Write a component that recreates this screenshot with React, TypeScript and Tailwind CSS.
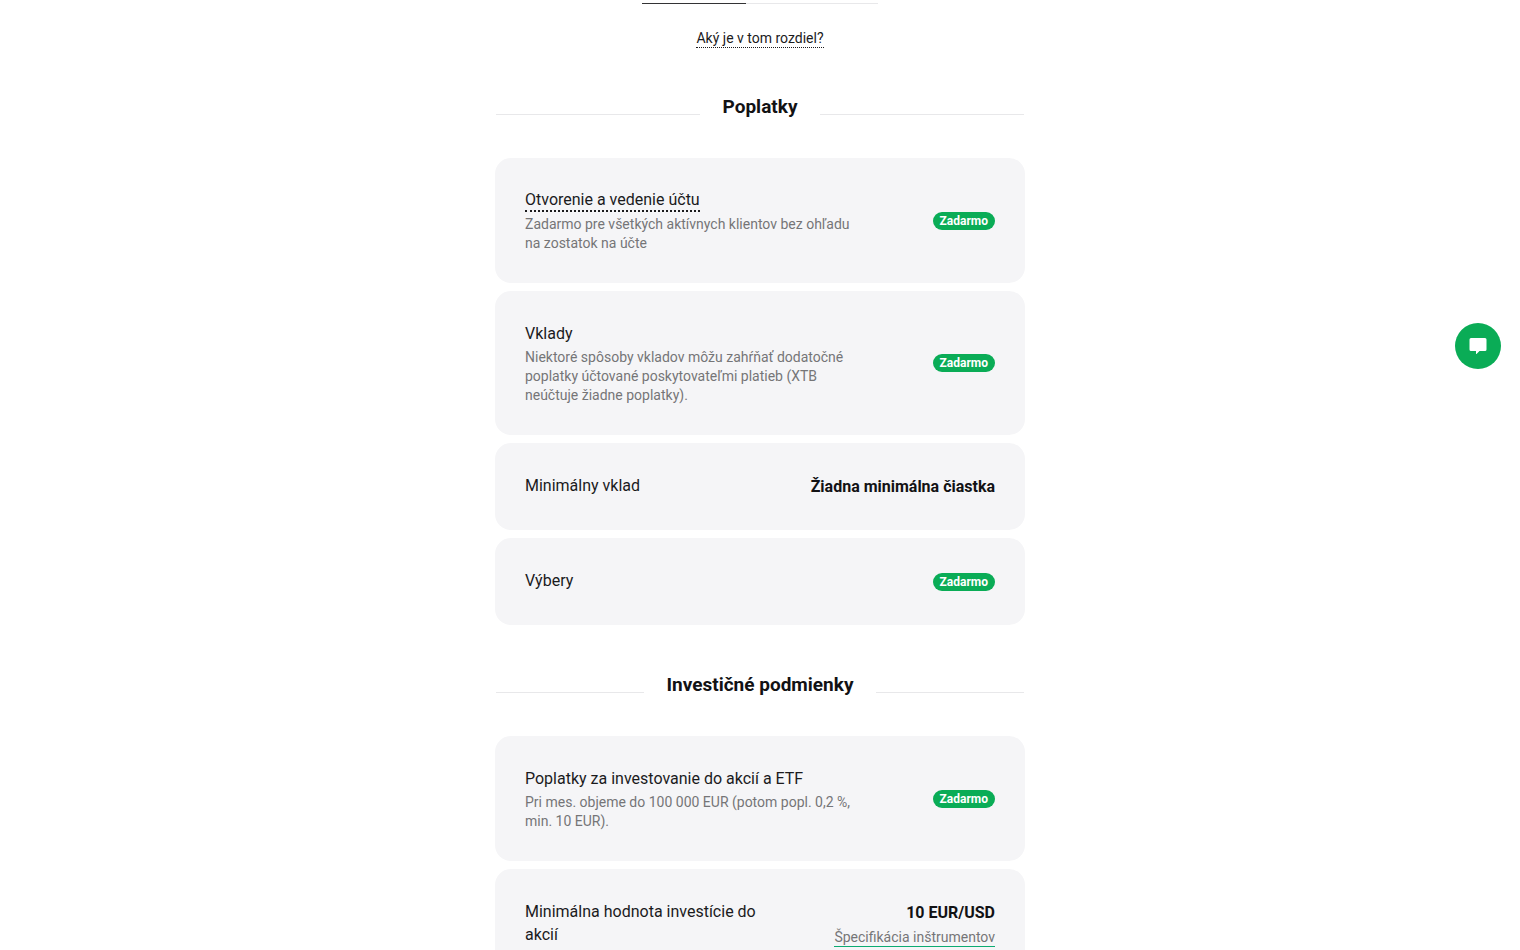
import React from "react";

type FeeRow = {
  title: string;
  note?: string;
  hinted?: boolean;
  badge?: string;
  value?: string;
  link?: string;
};

const fees: FeeRow[] = [
  {
    title: "Otvorenie a vedenie účtu",
    hinted: true,
    note: "Zadarmo pre všetkých aktívnych klientov bez ohľadu na zostatok na účte",
    badge: "Zadarmo",
  },
  {
    title: "Vklady",
    note: "Niektoré spôsoby vkladov môžu zahŕňať dodatočné poplatky účtované poskytovateľmi platieb (XTB neúčtuje žiadne poplatky).",
    badge: "Zadarmo",
  },
  { title: "Minimálny vklad", value: "Žiadna minimálna čiastka" },
  { title: "Výbery", badge: "Zadarmo" },
];

const conditions: FeeRow[] = [
  {
    title: "Poplatky za investovanie do akcií a ETF",
    note: "Pri mes. objeme do 100 000 EUR (potom popl. 0,2 %, min. 10 EUR).",
    badge: "Zadarmo",
  },
  {
    title: "Minimálna hodnota investície do akcií",
    value: "10 EUR/USD",
    link: "Špecifikácia inštrumentov",
  },
];

function Row({ row }: { row: FeeRow }) {
  return (
    <li className="flex items-center justify-between rounded-2xl bg-[#f5f5f7] p-[30px]">
      <div className={row.value ? "w-60" : "w-[335px]"}>
        <h3 className="mb-[3px] pt-px text-base leading-[23px] text-[#1b1b1d]">
          {row.hinted ? (
            <button
              type="button"
              className="block h-[23px] border-b-2 border-dotted border-[#1b1b1d] leading-[21px]"
            >
              {row.title}
            </button>
          ) : (
            row.title
          )}
        </h3>
        {row.note && (
          <p className="text-sm leading-[19px] text-[#757577]">{row.note}</p>
        )}
      </div>
      <div className="flex flex-col items-end gap-1">
        {row.badge && (
          <span className="rounded-full bg-[#0aac56] px-[7px] text-xs leading-[18px] font-bold text-white">
            {row.badge}
          </span>
        )}
        {row.value && (
          <strong className="text-base leading-[23px] font-bold text-[#121214]">
            {row.value}
          </strong>
        )}
        {row.link && (
          <a
            href="#instruments"
            className="border-b border-[#0cab72] text-sm leading-[18px] text-[#757577]"
          >
            {row.link}
          </a>
        )}
      </div>
    </li>
  );
}

function Section({ title, rows }: { title: string; rows: FeeRow[] }) {
  return (
    <section className="mb-[46px]">
      <div className="mb-[37px] flex h-7 items-center gap-[23px] px-px">
        <span className="mt-3.5 h-px flex-1 bg-[#e8e8ea]" />
        <h2 className="text-[19px] leading-7 font-bold text-[#121214]">{title}</h2>
        <span className="mt-3.5 h-px flex-1 bg-[#e8e8ea]" />
      </div>
      <ul className="flex flex-col gap-2">
        {rows.map((row) => (
          <Row key={row.title} row={row} />
        ))}
      </ul>
    </section>
  );
}

export default function App() {
  return (
    <div className="min-h-screen bg-white font-['Roboto',sans-serif]">
      <main className="mx-auto max-w-[530px]">
        <div className="mx-auto flex w-[236px] pt-[3px]">
          <span className="h-px w-[104px] bg-[#333335]" />
          <span className="h-px flex-1 bg-[#e8e8ea]" />
        </div>
        <div className="mt-6 mb-[45px] flex justify-center">
          <button
            type="button"
            className="h-5 border-b border-dotted border-[#1b1b1d] text-sm leading-5 text-[#1b1b1d]"
          >
            Aký je v tom rozdiel?
          </button>
        </div>
        <Section title="Poplatky" rows={fees} />
        <Section title="Investičné podmienky" rows={conditions} />
      </main>
      <button
        type="button"
        aria-label="Chat"
        className="fixed top-[323px] right-[19px] flex size-[46px] items-center justify-center rounded-full bg-[#0aac56]"
      >
        <svg viewBox="0 0 18 18" className="size-[18px]" fill="#fff" aria-hidden="true">
          <path d="M2 1H16Q17.500 1 17.500 2.500V12.500Q17.500 14 16 14H10.500L7.500 17Q7 17.300 7 16.500V14H2Q.5 14 .5 12.500V2.500Q.5 1 2 1Z" />
        </svg>
      </button>
    </div>
  );
}
